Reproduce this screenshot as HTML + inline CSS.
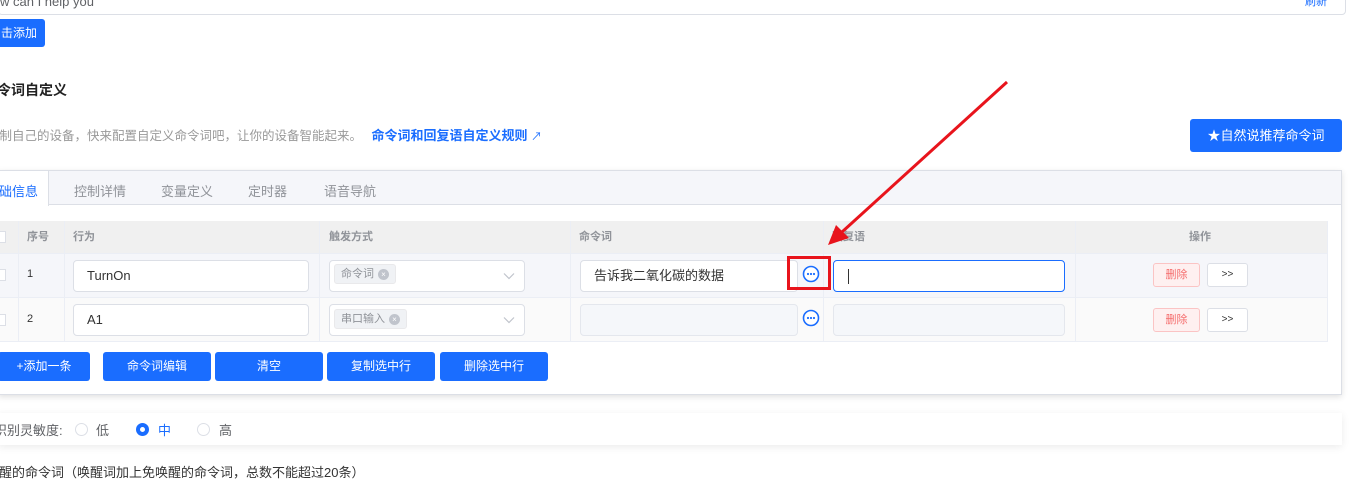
<!DOCTYPE html>
<html><head><meta charset="utf-8"><style>
*{box-sizing:border-box;margin:0;padding:0}
body{width:1371px;height:472px;overflow:hidden;background:#fff;font-family:"Liberation Sans","Noto Sans CJK SC",sans-serif;font-size:13px;color:#333;position:relative}
.a{position:absolute}
.btn{position:absolute;background:#1a6dff;color:#fff;border-radius:3px;text-align:center;font-size:12px}
.inp{position:absolute;border:1px solid #dcdfe6;border-radius:4px;background:#fff;font-size:13px;color:#333;padding-left:13px}
.dis{background:#f5f7fa;border-color:#e4e7ed}
.tag{position:absolute;background:#f0f2f5;border:1px solid #e9e9eb;border-radius:3px;font-size:11px;color:#909399;height:20px;line-height:18px;padding:0 6px}
.x{display:inline-block;width:11px;height:11px;border-radius:50%;background:#c0c4cc;color:#fff;font-size:8px;line-height:11px;text-align:center;margin-left:4px;vertical-align:middle}
.th{position:absolute;top:221px;height:32px;line-height:32px;font-size:11px;color:#909399;font-weight:bold}
.vl{position:absolute;width:1px;background:#ebeef5;top:221px;height:121px}
.del{position:absolute;width:47px;height:24px;border:1px solid #fbc4c4;background:#fef0f0;color:#f56c6c;font-size:11px;text-align:center;line-height:22px;border-radius:3px}
.nx{position:absolute;width:41px;height:24px;border:1px solid #dcdfe6;background:#fff;color:#333;font-size:10px;text-align:center;line-height:22px;border-radius:3px}
.rad{position:absolute;top:423px;width:13px;height:13px;border:1px solid #dcdfe6;border-radius:50%;background:#fff}
</style></head><body>
<div class="a" style="left:-2px;top:-20px;width:1348px;height:35px;border:1px solid #dcdfe6;border-radius:4px"></div>
<div class="a" style="left:0;top:-6px;font-size:13px;color:#606266">w can I help you</div>
<div class="a" style="left:1305px;top:-7px;font-size:11px;color:#1a6dff">刷新</div>
<div class="btn" style="left:-7px;top:19px;width:52px;height:28px;line-height:28px;font-size:12px">击添加</div>
<div class="a" style="left:-17px;top:80px;font-size:14px;font-weight:bold;color:#222">命令词自定义</div>
<div class="a" style="left:-13px;top:125px;font-size:12.5px;color:#999">控制自己的设备，快来配置自定义命令词吧，让你的设备智能起来。 <b style="color:#1a6dff;margin-left:6px;font-size:13px">命令词和回复语自定义规则</b> <span style="color:#1a6dff;font-size:11px">↗</span></div>
<div class="btn" style="left:1190px;top:119px;width:152px;height:33px;line-height:33px;font-size:13px">★自然说推荐命令词</div>
<div class="a" style="left:-2px;top:170px;width:1344px;height:225px;border:1px solid #dcdfe6;box-shadow:0 2px 6px rgba(0,0,0,.12);background:#fff"></div>
<div class="a" style="left:-1px;top:171px;width:1342px;height:34px;background:#f5f6fa;border-bottom:1px solid #dcdfe6"></div>
<div class="a" style="left:-1px;top:171px;width:50px;height:35px;background:#fff;border-right:1px solid #dcdfe6"></div>
<div class="a" style="left:-14px;top:181px;font-size:13px;color:#1a6dff">基础信息</div>
<div class="a" style="left:74px;top:181px;color:#909399">控制详情</div>
<div class="a" style="left:161px;top:181px;color:#909399">变量定义</div>
<div class="a" style="left:248px;top:181px;color:#909399">定时器</div>
<div class="a" style="left:324px;top:181px;color:#909399">语音导航</div>
<div class="a" style="left:0;top:221px;width:1327px;height:32px;background:#f0f0f0"></div>
<div class="a" style="left:0;top:253px;width:1327px;height:44px;background:#f5f6fa;border-top:1px solid #ebeef5"></div>
<div class="a" style="left:0;top:297px;width:1327px;height:45px;background:#fafafa;border-top:1px solid #ebeef5;border-bottom:1px solid #ebeef5"></div>
<div class="vl" style="left:18px"></div><div class="vl" style="left:64px"></div><div class="vl" style="left:319px"></div><div class="vl" style="left:570px"></div><div class="vl" style="left:823px"></div><div class="vl" style="left:1075px"></div><div class="vl" style="left:1327px"></div>
<div class="a" style="left:-6px;top:231px;width:12px;height:12px;border:1px solid #dcdfe6;background:#fff"></div>
<div class="a" style="left:-6px;top:269px;width:12px;height:12px;border:1px solid #dcdfe6;background:#fff"></div>
<div class="a" style="left:-6px;top:314px;width:12px;height:12px;border:1px solid #dcdfe6;background:#fff"></div>
<div class="th" style="left:27px">序号</div><div class="th" style="left:73px">行为</div><div class="th" style="left:329px">触发方式</div><div class="th" style="left:579px">命令词</div><div class="th" style="left:832px">回复语</div><div class="th" style="left:1189px">操作</div>
<div class="a" style="left:27px;top:268px;font-size:11px">1</div>
<div class="a" style="left:27px;top:313px;font-size:11px">2</div>
<div class="inp" style="left:73px;top:260px;width:236px;height:32px;line-height:30px">TurnOn</div>
<div class="inp" style="left:73px;top:304px;width:236px;height:32px;line-height:30px">A1</div>
<div class="inp" style="left:329px;top:260px;width:196px;height:32px"></div>
<div class="inp" style="left:329px;top:304px;width:196px;height:32px"></div>
<div class="tag" style="left:334px;top:264px">命令词<span class="x">×</span></div>
<div class="tag" style="left:334px;top:309px">串口输入<span class="x">×</span></div>
<svg class="a" style="left:503px;top:272px" width="12" height="8"><path d="M1 1.5L6 6.5L11 1.5" fill="none" stroke="#c0c4cc" stroke-width="1.2"/></svg>
<svg class="a" style="left:503px;top:316px" width="12" height="8"><path d="M1 1.5L6 6.5L11 1.5" fill="none" stroke="#c0c4cc" stroke-width="1.2"/></svg>
<div class="inp" style="left:580px;top:260px;width:218px;height:32px;line-height:30px">告诉我二氧化碳的数据</div>
<div class="inp dis" style="left:580px;top:304px;width:218px;height:32px"></div>
<svg class="a" style="left:802px;top:265px" width="18" height="18"><circle cx="9" cy="9" r="7.5" fill="#fff" stroke="#1a6dff" stroke-width="1.6"/><circle cx="6" cy="9" r="1.1" fill="#1a6dff"/><circle cx="9" cy="9" r="1.1" fill="#1a6dff"/><circle cx="12" cy="9" r="1.1" fill="#1a6dff"/></svg>
<svg class="a" style="left:802px;top:309px" width="18" height="18"><circle cx="9" cy="9" r="7.5" fill="#fff" stroke="#1a6dff" stroke-width="1.6"/><circle cx="6" cy="9" r="1.1" fill="#1a6dff"/><circle cx="9" cy="9" r="1.1" fill="#1a6dff"/><circle cx="12" cy="9" r="1.1" fill="#1a6dff"/></svg>
<div class="inp" style="left:833px;top:260px;width:232px;height:32px;border-color:#1a6dff"><div style="position:absolute;left:14px;top:8px;width:1px;height:15px;background:#333"></div></div>
<div class="inp dis" style="left:833px;top:304px;width:232px;height:32px"></div>
<div class="del" style="left:1153px;top:263px">删除</div><div class="nx" style="left:1207px;top:263px">&gt;&gt;</div>
<div class="del" style="left:1153px;top:308px">删除</div><div class="nx" style="left:1207px;top:308px">&gt;&gt;</div>
<div class="a" style="left:787px;top:256px;width:44px;height:34px;border:3px solid #e8141c"></div>
<svg class="a" style="left:0;top:0" width="1371" height="472"><line x1="1007" y1="82" x2="842" y2="232" stroke="#e8141c" stroke-width="3"/><polygon points="828,245 836,225 849,238" fill="#e8141c"/></svg>
<div class="btn" style="left:-2px;top:352px;width:92px;height:29px;line-height:29px">+添加一条</div>
<div class="btn" style="left:103px;top:352px;width:108px;height:29px;line-height:29px">命令词编辑</div>
<div class="btn" style="left:215px;top:352px;width:108px;height:29px;line-height:29px">清空</div>
<div class="btn" style="left:327px;top:352px;width:108px;height:29px;line-height:29px">复制选中行</div>
<div class="btn" style="left:440px;top:352px;width:108px;height:29px;line-height:29px">删除选中行</div>
<div class="a" style="left:-2px;top:413px;width:1344px;height:32px;background:#fff;box-shadow:0 2px 8px rgba(0,0,0,.08)"></div>
<div class="a" style="left:-6px;top:420px;color:#606266">识别灵敏度:</div>
<div class="rad" style="left:75px"></div><div class="a" style="left:96px;top:420px;color:#606266">低</div>
<div class="rad" style="left:136px;border:4px solid #1a6dff"></div><div class="a" style="left:158px;top:420px;color:#1a6dff">中</div>
<div class="rad" style="left:197px"></div><div class="a" style="left:219px;top:420px;color:#606266">高</div>
<div class="a" style="left:-14px;top:462px;color:#333">唤醒的命令词（唤醒词加上免唤醒的命令词，总数不能超过20条）</div>
</body></html>
